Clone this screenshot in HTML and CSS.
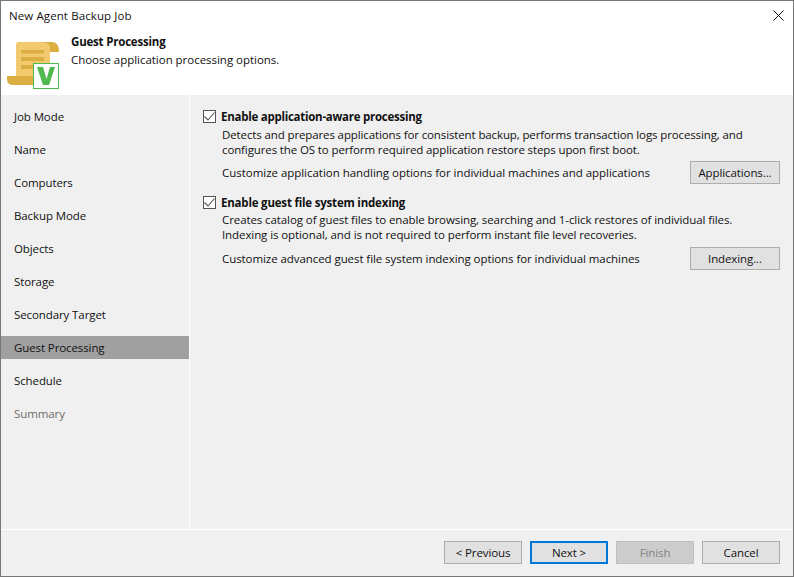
FILE: index.html
```html
<!DOCTYPE html>
<html lang="en">
<head>
<meta charset="utf-8">
<title>New Agent Backup Job</title>
<link rel="stylesheet" href="styles.css">
</head>
<body>
<div class="window">
  <div class="titlebar">
    <span class="title">New Agent Backup Job</span>
    <svg class="close" width="11" height="11" viewBox="0 0 11 11"><path d="M.5.5l10 10M10.500.5l-10 10" stroke="#111" stroke-width="1" fill="none"/></svg>
  </div>
  <header class="banner">
    <svg class="logo" width="52" height="47" viewBox="0 0 52 47">
      <path d="M9 3Q9 0 12 0H42Q44 1 43 5V36H9Z" fill="#f2c96f"/>
      <path d="M36 0H45Q52 0 52 10H43V5Q43 1 36 0Z" fill="#dcae41"/>
      <path d="M0 34H27V43H6Q0 43 0 37Z" fill="#dcae41"/>
      <path d="M14 8H37V11.500H14ZM14 15H37V19H14ZM14 23H26V27H14Z" fill="#dcae41"/>
      <rect x="26" y="21" width="26" height="26" fill="#fff"/>
      <rect x="26.500" y="21.500" width="25" height="25" fill="#fff" stroke="#4fb84f" stroke-width="1"/>
      <path d="M30 25H36L39.500 37L43 25H48L42 43H36Z" fill="#4fb84f"/>
    </svg>
    <div class="banner-text">
      <div class="banner-title">Guest Processing</div>
      <div class="banner-sub">Choose application processing options.</div>
    </div>
  </header>
  <div class="middle">
    <nav class="steps">
      <div class="step">Job Mode</div>
      <div class="step">Name</div>
      <div class="step">Computers</div>
      <div class="step">Backup Mode</div>
      <div class="step">Objects</div>
      <div class="step">Storage</div>
      <div class="step">Secondary Target</div>
      <div class="step active">Guest Processing</div>
      <div class="step">Schedule</div>
      <div class="step muted">Summary</div>
    </nav>
    <main class="content">
      <section class="option">
        <div class="check-row">
          <span class="box"><svg width="11" height="9" viewBox="0 0 11 9"><path d="M.5 4.500L4 8L10.500.5" stroke="#555" stroke-width="1.100" fill="none"/></svg></span>
          <span class="check-label">Enable application-aware processing</span>
        </div>
        <p class="desc">Detects and prepares applications for consistent backup, performs transaction logs processing, and<br>configures the OS to perform required application restore steps upon first boot.</p>
        <div class="action">
          <span>Customize application handling options for individual machines and applications</span>
          <button class="btn wide">Applications...</button>
        </div>
      </section>
      <section class="option second">
        <div class="check-row">
          <span class="box"><svg width="11" height="9" viewBox="0 0 11 9"><path d="M.5 4.500L4 8L10.500.5" stroke="#555" stroke-width="1.100" fill="none"/></svg></span>
          <span class="check-label">Enable guest file system indexing</span>
        </div>
        <p class="desc">Creates catalog of guest files to enable browsing, searching and 1-click restores of individual files.<br>Indexing is optional, and is not required to perform instant file level recoveries.</p>
        <div class="action">
          <span>Customize advanced guest file system indexing options for individual machines</span>
          <button class="btn wide">Indexing...</button>
        </div>
      </section>
    </main>
  </div>
  <footer class="footer">
    <button class="btn">&lt; Previous</button>
    <button class="btn primary">Next &gt;</button>
    <button class="btn disabled">Finish</button>
    <button class="btn">Cancel</button>
  </footer>
</div>
</body>
</html>
```
FILE: styles.css
```css
* { box-sizing: border-box; }
html, body { margin: 0; height: 100%; }
body { font-family: "Open Sans", "Noto Sans", sans-serif; font-size: 11.500px; color: #111; background: #fff; }
.window { width: 794px; height: 577px; border: 1px solid #777; display: flex; flex-direction: column; background: #fff; }
.titlebar { height: 29px; flex: none; display: flex; align-items: center; justify-content: space-between; padding: 0 9px 0 8px; }
.title { letter-spacing: 0.1px; }
.banner { height: 65px; flex: none; display: flex; padding-left: 6px; }
.logo { flex: none; margin-top: 12px; margin-right: 12px; }
.banner-text { padding-top: 3px; }
.banner-title { font-weight: 700; line-height: 17px; letter-spacing: -0.2px; }
.banner-sub { line-height: 19px; letter-spacing: -0.03px; }
.middle { flex: 1; display: flex; min-height: 0; }
.steps { width: 188px; flex: none; background: #f0f0f0; padding-top: 10px; display: flex; flex-direction: column; gap: 10px; letter-spacing: -0.1px; }
.step { height: 23px; line-height: 23px; padding-left: 13px; }
.step.active { background: #a0a0a0; }
.step.muted { color: #6d6d6d; }
.content { flex: 1; margin-left: 1px; background: #f0f0f0; padding: 13px 13px 0 13px; }
.option.second { margin-top: 10px; }
.check-row { display: flex; align-items: center; height: 16px; gap: 5px; }
.box { width: 13px; height: 13px; border: 1px solid #555; background: #fff; display: flex; align-items: center; justify-content: center; flex: none; }
.check-label { font-weight: 700; letter-spacing: -0.26px; }
.second .check-label { letter-spacing: -0.2px; }
.desc { margin: 3px 0 0 19px; line-height: 15px; letter-spacing: -0.12px; }
.second .desc { margin-top: 2px; letter-spacing: -0.09px; }
.action { display: flex; align-items: center; justify-content: space-between; margin: 4px 0 0 19px; height: 23px; letter-spacing: -0.03px; line-height: 21px; }
.second .action { margin-top: 5px; letter-spacing: -0.07px; }
.btn { width: 78px; height: 23px; padding: 0; border: 1px solid #adadad; background: #e1e1e1; font: inherit; color: #111; letter-spacing: -0.1px; }
.btn.wide { width: 90px; }
.btn.primary { border: 2px solid #0078d7; }
.btn.disabled { background: #cccccc; border-color: #bfbfbf; color: #838383; }
.footer { height: 46px; flex: none; margin-top: 1px; background: #f0f0f0; display: flex; justify-content: flex-end; gap: 8px; padding: 11px 13px 0 0; }
```
